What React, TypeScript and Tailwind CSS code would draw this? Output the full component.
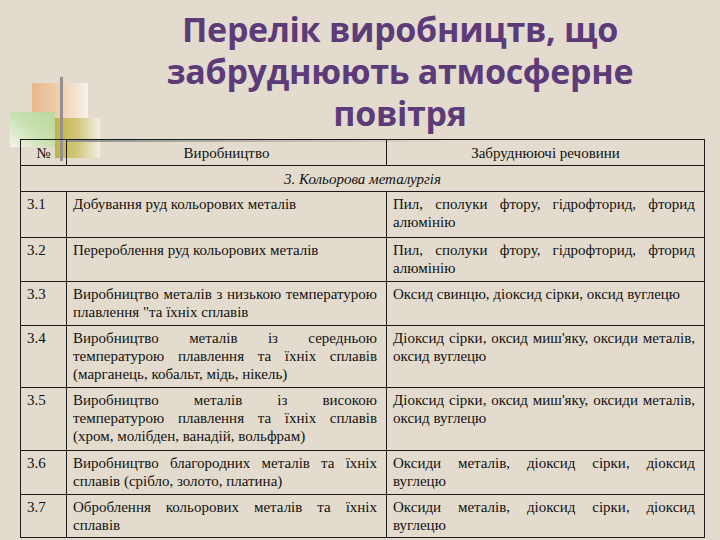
import React from "react";

interface Row {
  num: string;
  name: string;
  pollutants: string;
  h: string;
}

const rows: Row[] = [
  {
    num: "3.1",
    name: "Добування руд кольорових металів",
    pollutants: "Пил, сполуки фтору, гідрофторид, фторид алюмінію",
    h: "h-[46px]",
  },
  {
    num: "3.2",
    name: "Перероблення руд кольорових металів",
    pollutants: "Пил, сполуки фтору, гідрофторид, фторид алюмінію",
    h: "h-[44px]",
  },
  {
    num: "3.3",
    name: 'Виробництво металів з низькою температурою плавлення "та їхніх сплавів',
    pollutants: "Оксид свинцю, діоксид сірки, оксид вуглецю",
    h: "h-[44px]",
  },
  {
    num: "3.4",
    name: "Виробництво металів із середньою температурою плавлення та їхніх сплавів (марганець, кобальт, мідь, нікель)",
    pollutants: "Діоксид сірки, оксид миш'яку, оксиди металів, оксид вуглецю",
    h: "h-[62px]",
  },
  {
    num: "3.5",
    name: "Виробництво металів із високою температурою плавлення та їхніх сплавів (хром, молібден, ванадій, вольфрам)",
    pollutants: "Діоксид сірки, оксид миш'яку, оксиди металів, оксид вуглецю",
    h: "h-[63px]",
  },
  {
    num: "3.6",
    name: "Виробництво благородних металів та їхніх сплавів (срібло, золото, платина)",
    pollutants: "Оксиди металів, діоксид сірки, діоксид вуглецю",
    h: "h-[44px]",
  },
  {
    num: "3.7",
    name: "Оброблення кольорових металів та їхніх сплавів",
    pollutants: "Оксиди металів, діоксид сірки, діоксид вуглецю",
    h: "h-[43px]",
  },
];

const cell =
  "border border-[#1c1a18] align-top pt-[3px] pb-[3px] pl-[6px] pr-[9px] text-justify";

const Decoration = () => (
  <div className="absolute left-0 top-0 w-[120px] h-[165px] pointer-events-none">
    <div className="absolute left-[32px] top-[83px] w-[56px] h-[37px] bg-gradient-to-r from-[#e8b88c] via-[#efcfae] to-[#f7f1ea]" />
    <div className="absolute left-[10px] top-[112px] w-[45px] h-[35px] bg-gradient-to-tr from-[#f4f6ee] via-[#c9e0b0] to-[#b9d79c]" />
    <div className="absolute left-[55px] top-[118px] w-[45px] h-[40px] bg-gradient-to-r from-[#c2b33c] via-[#d2c77a] to-[#f2efe4]" />
    <div className="absolute left-[60px] top-[77px] w-[3px] h-[84px] bg-[#8f9290]" />
  </div>
);

export default function App() {
  return (
    <div className="relative w-[720px] h-[540px] overflow-hidden bg-[#e2dbce] font-[family-name:'Liberation_Serif',serif] text-[#141210]">
      <Decoration />
      <div className="relative h-[139px] pl-[80px] pt-[8px] text-center font-[family-name:'Open_Sans',sans-serif] font-bold text-[34px] leading-[42px] tracking-[-0.3px] text-[#5d3a78]">
        <p>Перелік виробництв, що</p>
        <p>забруднюють атмосферне</p>
        <p>повітря</p>
      </div>
      <div className="relative ml-[20px]">
        <div className="absolute left-[46px] top-0 w-[400px] h-[3px] bg-gradient-to-r from-[#8f9290] to-transparent" />
        <table className="relative w-[684px] table-fixed border-collapse text-[15px] leading-[18px]">
          <colgroup>
            <col className="w-[46px]" />
            <col className="w-[320px]" />
            <col className="w-[318px]" />
          </colgroup>
          <tbody>
            <tr className="h-[26px]">
              <td className="border border-[#1c1a18] text-center align-middle">№</td>
              <td className="border border-[#1c1a18] text-center align-middle">Виробництво</td>
              <td className="border border-[#1c1a18] text-center align-middle">Забруднюючі речовини</td>
            </tr>
            <tr className="h-[26px]">
              <td colSpan={3} className="border border-[#1c1a18] text-center align-middle italic">
                3. Кольорова металургія
              </td>
            </tr>
            {rows.map((row) => (
              <tr key={row.num} className={row.h}>
                <td className={cell}>{row.num}</td>
                <td className={cell}>{row.name}</td>
                <td className={cell}>{row.pollutants}</td>
              </tr>
            ))}
          </tbody>
        </table>
      </div>
    </div>
  );
}
